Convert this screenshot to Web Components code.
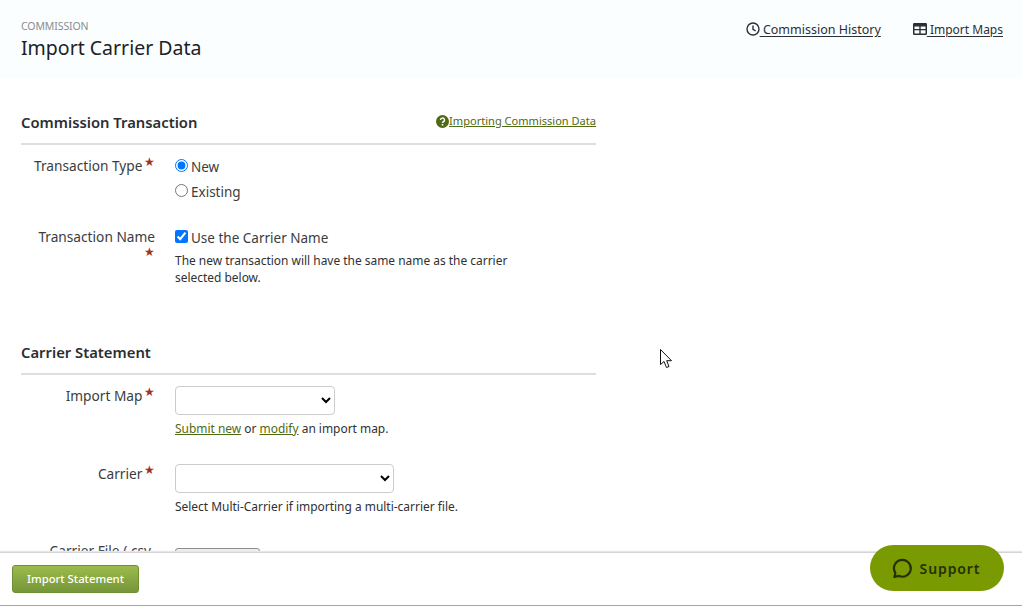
<!DOCTYPE html>
<html><head><meta charset="utf-8"><style>
html,body{margin:0;padding:0;height:606px;overflow:hidden;background:#fff}
body{font-family:"Noto Sans","Open Sans",sans-serif;color:#222;position:relative}
</style></head><body>
<app-header>
  <span slot="eyebrow">COMMISSION</span>
  <span slot="title">Import Carrier Data</span>
  <top-link><svg width="14" height="14" viewBox="0 0 14 14" fill="none" stroke="#2b2f33" stroke-width="1.4"><circle cx="7" cy="7" r="6"/><path d="M7 3.400V7.400L9.600 8.800"/></svg><a href="#">&nbsp;Commission History</a></top-link>
  <top-link style="font-size:12px"><svg width="14" height="12" viewBox="0 0 14 12"><path fill="#2b2f33" fill-rule="evenodd" d="M0 1.200A1.200 1.200 0 0 1 1.200 0H12.800A1.200 1.200 0 0 1 14 1.200V10.800A1.200 1.200 0 0 1 12.800 12H1.200A1.200 1.200 0 0 1 0 10.800ZM1.500 3.500V6H6.300V3.500ZM7.700 3.500V6H12.500V3.500ZM1.500 7.300V10.500H6.300V7.300ZM7.700 7.300V10.500H12.500V7.300Z"/></svg><a href="#">&nbsp;Import Maps</a></top-link>
</app-header>
<form-section heading="Commission Transaction" style="--top:32px">
  <a slot="aside" href="#"><svg width="13" height="13" viewBox="0 0 13 13"><circle cx="6.500" cy="6.500" r="6.500" fill="#4f6a12"/><path d="M4.500 5A2 1.900 0 1 1 7.400 6.700C6.800 7 6.500 7.300 6.500 8" fill="none" stroke="#fff" stroke-width="1.500"/><rect x="5.700" y="9" width="1.600" height="1.600" fill="#fff"/></svg>Importing Commission Data</a>
  <form-row label="Transaction Type" style="--h:71px">
    <choice-line><input type="radio" name="t" checked>New</choice-line>
    <choice-line style="--gap:5px"><input type="radio" name="t">Existing</choice-line>
  </form-row>
  <form-row label="Transaction Name" style="--h:113px;--star-block:block;--star-lh:10px;--star-ml:0">
    <choice-line><input type="checkbox" checked>Use the Carrier Name</choice-line>
    <help-text style="--w:350px;--lh:16.5px">The new transaction will have the same name as the carrier selected below.</help-text>
  </form-row>
</form-section>
<form-section heading="Carrier Statement">
  <form-row label="Import Map" style="--h:78px">
    <select-box style="--w:160px"></select-box>
    <help-text><a href="#">Submit new</a> or <a href="#">modify</a> an import map.</help-text>
  </form-row>
  <form-row label="Carrier" style="--h:84px">
    <select-box style="--w:219px"></select-box>
    <help-text>Select Multi-Carrier if importing a multi-carrier file.</help-text>
  </form-row>
  <form-row label="Carrier File (.csv" style="--h:40px;--star-block:block;--star-lh:10px;--lab-shift:-7px;--lab-pr:4px">
    <file-box></file-box>
  </form-row>
</form-section>
<action-bar>
  <green-button>Import Statement</green-button>
  <support-pill>Support</support-pill>
</action-bar>
<cursor-mark></cursor-mark>
<script>
function def(name, html){
  customElements.define(name, class extends HTMLElement{
    constructor(){super();this.attachShadow({mode:'open'}).innerHTML=html;}
    connectedCallback(){
      this.shadowRoot.querySelectorAll('[data-attr]').forEach(e=>{e.textContent=this.getAttribute(e.dataset.attr)||''});
    }
  });
}
def('app-header',`<style>
:host{display:flex;justify-content:space-between;height:78px;background:#fbfefe;box-sizing:border-box;padding:0 19px 0 21px}
.l{padding-top:19px}
.e{font-size:10.500px;line-height:15px;color:#8a8d90;letter-spacing:-.1px}
.t{font-size:19.500px;line-height:28px;color:#1e2124}
.r{display:flex;gap:32px;padding-top:20px;align-items:flex-start}
</style><div class="l"><div class="e"><slot name="eyebrow"></slot></div><div class="t"><slot name="title"></slot></div></div><div class="r"><slot></slot></div>`);
def('top-link',`<style>
:host{display:inline-flex;align-items:center;font-size:12.500px;line-height:19px;color:#2b2f33}
::slotted(a){color:#2b2f33;text-decoration:underline;text-underline-offset:2px}
::slotted(svg){flex:none;margin-top:-2px}
</style><slot></slot>`);
def('form-section',`<style>
:host{display:block;width:575px;margin-left:21px;padding-top:var(--top,0)}
.h{display:flex;justify-content:space-between;align-items:flex-start;height:33px;border-bottom:2px solid #dedede}
h2{margin:0;font-size:14.800px;line-height:24px;font-weight:600;color:#2b2f33}
.a{font-size:11.050px;line-height:22px;color:#4f6a12}
::slotted(a){color:#4f6a12;display:inline-flex;align-items:center}
.b{padding-top:11px}
</style><div class="h"><h2 data-attr="heading"></h2><div class="a"><slot name="aside"></slot></div></div><div class="b"><slot></slot></div>`);
def('form-row',`<style>
:host{display:grid;grid-template-columns:134px 1fr;column-gap:20px;height:var(--h,60px)}
.lab{text-align:right;font-size:13.700px;line-height:20px;color:#3a3d40;margin-top:var(--lab-shift,0);padding-right:var(--lab-pr,0)}
.s{color:#a5301f;font-size:12px;display:var(--star-block,inline);line-height:var(--star-lh,0);vertical-align:5px;margin-left:var(--star-ml,-2px)}
</style><div class="lab"><span data-attr="label"></span> <span class="s">★</span></div><div><slot></slot></div>`);
def('choice-line',`<style>
:host{display:flex;align-items:center;height:20px;margin-top:var(--gap,1px);font-size:13.500px;color:#3a3d40}
::slotted(input){margin:-3px 3px 0 0;width:13px;height:13px}
</style><slot></slot>`);
def('help-text',`<style>
:host{display:block;font-size:11.950px;line-height:var(--lh,17px);color:#2e3133;margin-top:5px;max-width:var(--w,none)}
::slotted(a){color:#4f6a12}
</style><slot></slot>`);
def('select-box',`<style>
:host{display:block;height:29px}
select{width:var(--w);height:29px;background:#fff;border:1px solid #ccc;border-radius:4px;font:inherit;display:block}
</style><select><option></option></select>`);
def('file-box',`<style>:host{display:block;width:85px;height:24px;background:#efefef;border:1px solid #8c8c8c;border-radius:3px;box-sizing:border-box}</style>`);
def('action-bar',`<style>
:host{position:absolute;left:0;right:0;top:552px;height:54px;box-sizing:border-box;display:flex;justify-content:space-between;align-items:flex-start;padding:12px 18px 0 12px;background:#fff;border-top:1px solid #d4d4d8;border-bottom:1px solid #a5a5a5;box-shadow:0 -1px 1px #e6e6ea}
</style><slot></slot>`);
def('green-button',`<style>
:host{display:flex;align-items:center;justify-content:center;width:127px;height:28px;box-sizing:border-box;padding-bottom:2px;background:linear-gradient(#9cba4c,#76963a);border:1px solid #6f8f35;border-radius:3px;color:#fff;font-size:11.300px;font-weight:500}
</style><slot></slot>`);
def('support-pill',`<style>
:host{display:flex;align-items:center;justify-content:center;gap:7px;width:134px;height:46px;margin-top:-20px;background:#7a9a01;border-radius:23px;color:#253005;font-size:14px;font-weight:600;letter-spacing:.9px;position:relative;z-index:2;box-sizing:border-box;padding-right:2px}
svg{display:block}
</style><svg width="21" height="21" viewBox="0 0 20 20" fill="none" stroke="#253005" stroke-width="2.100"><path d="M2.300 18L3.200 14.200A8 8 0 1 1 6.400 17Z" stroke-linejoin="round"/></svg><slot></slot>`);
def('cursor-mark',`<style>
:host{position:absolute;left:660px;top:349px;width:13px;height:20px}
</style><svg width="13" height="20" viewBox="0 0 13 20"><path d="M.5.500V15.500L4 12.500L6.500 18.500L9 17.500L6.700 11.700H11.500Z" fill="#fff" stroke="#111" stroke-width="1"/></svg>`);
</script>
</body></html>
